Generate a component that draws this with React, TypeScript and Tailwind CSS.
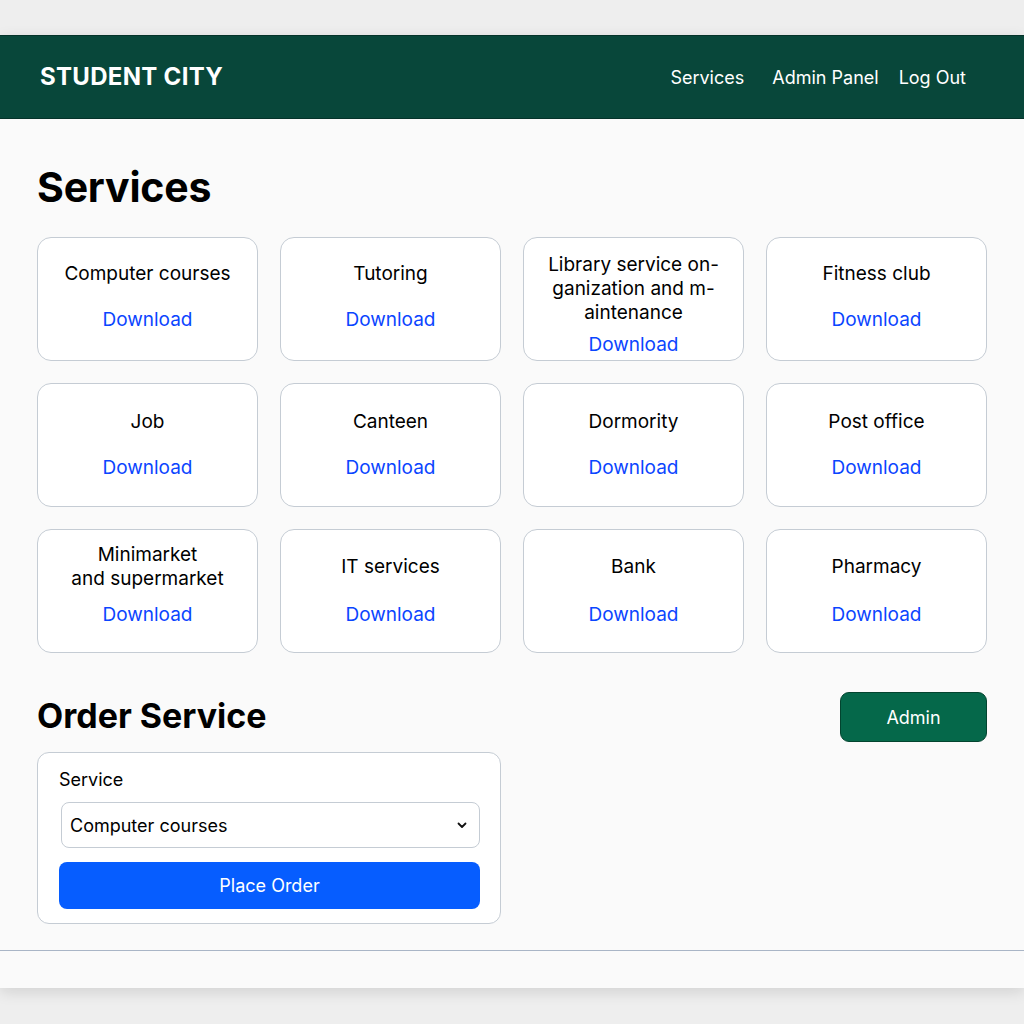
import React, { useState } from 'react';

interface ServiceItem {
  title: React.ReactNode;
  pad: string;
  gap: string;
}

const services: ServiceItem[] = [
  { title: 'Computer courses', pad: 'pt-[24px]', gap: 'mt-[22px]' },
  { title: 'Tutoring', pad: 'pt-[24px]', gap: 'mt-[22px]' },
  { title: <>Library service on-<br />ganization and m-<br />aintenance</>, pad: 'pt-[15px]', gap: 'mt-[8px]' },
  { title: 'Fitness club', pad: 'pt-[24px]', gap: 'mt-[22px]' },
  { title: 'Job', pad: 'pt-[26px]', gap: 'mt-[22px]' },
  { title: 'Canteen', pad: 'pt-[26px]', gap: 'mt-[22px]' },
  { title: 'Dormority', pad: 'pt-[26px]', gap: 'mt-[22px]' },
  { title: 'Post office', pad: 'pt-[26px]', gap: 'mt-[22px]' },
  { title: <>Minimarket<br />and supermarket</>, pad: 'pt-[13px]', gap: 'mt-[12px]' },
  { title: 'IT services', pad: 'pt-[25px]', gap: 'mt-[24px]' },
  { title: 'Bank', pad: 'pt-[25px]', gap: 'mt-[24px]' },
  { title: 'Pharmacy', pad: 'pt-[25px]', gap: 'mt-[24px]' },
];

const serviceNames = [
  'Computer courses', 'Tutoring', 'Library service organization and maintenance', 'Fitness club',
  'Job', 'Canteen', 'Dormority', 'Post office', 'Minimarket and supermarket', 'IT services', 'Bank', 'Pharmacy',
];

const App: React.FC = () => {
  const [selected, setSelected] = useState(serviceNames[0]);

  return (
    <div className="min-h-screen bg-[#eeeeee] pt-[35px] pb-[36px] font-['Inter','Noto_Sans',sans-serif] text-black">
      <div className="bg-[#fafafa] shadow-[0_4px_14px_rgba(0,0,0,0.12)]">
        {/* Header */}
        <header className="h-[84px] bg-[#08473a] border-y border-[#05332a] flex items-center justify-between pl-[40px] pr-[58px]">
          <div className="text-white text-[24px] font-bold tracking-[0.3px]">STUDENT CITY</div>
          <nav className="flex items-center text-white text-[18px]">
            <a className="mr-[28px]">Services</a>
            <a className="mr-[20px]">Admin Panel</a>
            <a>Log Out</a>
          </nav>
        </header>

        <main className="px-[37px] pt-[43px] pb-[26px] border-b border-[#a9b5c6]">
          <h1 className="text-[41px] font-bold leading-[50px] tracking-[-0.2px]">Services</h1>

          <div className="grid grid-cols-4 gap-[22px] mt-[25px]">
            {services.map((s, i) => (
              <div
                key={i}
                className={`h-[124px] bg-white border border-[#c5ccd4] rounded-[14px] flex flex-col items-center text-center ${s.pad}`}
              >
                <div className="text-[19px] leading-[24px]">{s.title}</div>
                <a className={`text-[19px] leading-[24px] text-[#0b45ff] ${s.gap}`}>Download</a>
              </div>
            ))}
          </div>

          <div className="flex items-start justify-between mt-[39px]">
            <div className="w-[464px]">
              <h2 className="text-[34px] font-bold leading-[40px] mt-[4px]">Order Service</h2>
              <div className="mt-[16px] bg-white border border-[#c5ccd4] rounded-[12px] pt-[15px] pb-[14px] pl-[21px] pr-[20px]">
                <label className="block text-[18px] leading-[24px]">Service</label>
                <div className="relative mt-[10px] ml-[2px]">
                  <select
                    value={selected}
                    onChange={(e) => setSelected(e.target.value)}
                    className="appearance-none w-full h-[46px] bg-white border border-[#c5ccd4] rounded-[8px] pl-[8px] pr-[36px] text-[18px] outline-none"
                  >
                    {serviceNames.map((n) => (
                      <option key={n} value={n}>{n}</option>
                    ))}
                  </select>
                  <svg className="absolute right-[12px] top-[17px] w-[12px] h-[12px] pointer-events-none" viewBox="0 0 12 12" fill="none">
                    <path d="M2.5 4.5L6 8l3.5-3.5" stroke="#111" strokeWidth="1.8" strokeLinecap="round" strokeLinejoin="round" />
                  </svg>
                </div>
                <button className="mt-[14px] w-full h-[47px] bg-[#065dff] rounded-[8px] text-white text-[18px]">
                  Place Order
                </button>
              </div>
            </div>
            <button className="w-[147px] h-[50px] bg-[#05684a] border border-[#03442f] rounded-[9px] text-white text-[18px]">
              Admin
            </button>
          </div>
        </main>
        <div className="h-[37px]" />
      </div>
    </div>
  );
};

export default App;
